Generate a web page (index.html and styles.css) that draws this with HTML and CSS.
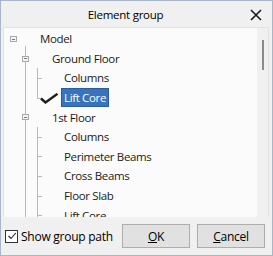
FILE: index.html
```html
<!DOCTYPE html>
<html lang="en">
<head>
  <meta charset="UTF-8">
  <title>Element group</title>
  <link rel="stylesheet" href="styles.css">
</head>
<body>

<div class="window">
  <div class="titlebar">
    <span class="title">Element group</span>
    <svg class="close" width="12" height="12" viewBox="0 0 12 12">
      <path d="M1 1 L11 11 M11 1 L1 11" stroke="#1a1a1a" stroke-width="1.6" fill="none"/>
    </svg>
  </div>

  <div class="tree">
    <div class="items">
      <div class="row">
        <span class="cell exp root"></span>
        <span class="state"></span>
        <span class="label">Model</span>
      </div>
      <div class="row">
        <span class="cell"></span>
        <span class="cell exp first"></span>
        <span class="state"></span>
        <span class="label">Ground Floor</span>
      </div>
      <div class="row">
        <span class="cell"></span>
        <span class="cell vline"></span>
        <span class="cell tee"></span>
        <span class="state"></span>
        <span class="label">Columns</span>
      </div>
      <div class="row">
        <span class="cell"></span>
        <span class="cell vline"></span>
        <span class="cell ell"></span>
        <span class="state">
          <svg class="tick" width="19" height="11" viewBox="0 0 19 11">
            <path d="M1 5.5 L5.5 9.5 L17.5 0.8" stroke="#1e1e1e" stroke-width="2.4" fill="none"/>
          </svg>
        </span>
        <span class="label selected">Lift Core</span>
      </div>
      <div class="row">
        <span class="cell"></span>
        <span class="cell exp"></span>
        <span class="state"></span>
        <span class="label">1st Floor</span>
      </div>
      <div class="row">
        <span class="cell"></span>
        <span class="cell vline"></span>
        <span class="cell tee"></span>
        <span class="state"></span>
        <span class="label">Columns</span>
      </div>
      <div class="row">
        <span class="cell"></span>
        <span class="cell vline"></span>
        <span class="cell tee"></span>
        <span class="state"></span>
        <span class="label">Perimeter Beams</span>
      </div>
      <div class="row">
        <span class="cell"></span>
        <span class="cell vline"></span>
        <span class="cell tee"></span>
        <span class="state"></span>
        <span class="label">Cross Beams</span>
      </div>
      <div class="row">
        <span class="cell"></span>
        <span class="cell vline"></span>
        <span class="cell tee"></span>
        <span class="state"></span>
        <span class="label">Floor Slab</span>
      </div>
      <div class="row">
        <span class="cell"></span>
        <span class="cell vline"></span>
        <span class="cell tee"></span>
        <span class="state"></span>
        <span class="label">Lift Core</span>
      </div>
    </div>
    <div class="scrollbar">
      <div class="thumb"></div>
    </div>
  </div>

  <div class="footer">
    <label class="check">
      <span class="box">
        <svg width="10" height="10" viewBox="0 0 10 10">
          <path d="M1.5 5 L4 7.5 L8.8 2" stroke="#222" stroke-width="1.1" fill="none"/>
        </svg>
      </span>
      Show group path
    </label>
    <button class="btn"><u>O</u>K</button>
    <button class="btn"><u>C</u>ancel</button>
  </div>
</div>

</body>
</html>
```

FILE: styles.css
```css
body {
  margin: 0;
  font-family: "Open Sans", "Noto Sans", sans-serif;
  font-size: 11.5px;
  letter-spacing: -0.25px;
  color: #000;
}

.window {
  width: 273px;
  height: 256px;
  box-sizing: border-box;
  border: 1px solid #a7b6ca;
  background-color: #f0f0f0;
  display: flex;
  flex-direction: column;
}

.titlebar {
  height: 26px;
  display: flex;
  align-items: center;
  justify-content: center;
  position: relative;
}

.title {
  font-size: 11.5px;
  margin-right: 22px;
  margin-top: 1px;
}

.close {
  position: absolute;
  right: 10px;
  top: 8px;
}

.tree {
  height: 190px;
  margin: 0 3px 0 2px;
  border: 1px solid #e2e2e2;
  border-bottom: none;
  box-sizing: border-box;
  display: flex;
  overflow: hidden;
}

.items {
  flex: 1;
  background-color: #fbfbfb;
  padding: 1px 0 0 3px;
  letter-spacing: -0.35px;
}

.row {
  height: 19.6px;
  display: flex;
  align-items: center;
}

.cell {
  width: 12px;
  height: 100%;
  flex-shrink: 0;
  position: relative;
}

/* tree connector lines */
.cell.vline::before,
.cell.tee::before,
.cell.ell::before,
.cell.exp::before {
  content: "";
  position: absolute;
  left: 6px;
  top: 0;
  bottom: 0;
  border-left: 1px solid #b9b9b9;
}

.cell.exp.first::before {
  top: -3px;
}

.cell.ell::before {
  bottom: 50%;
}

.cell.tee::after,
.cell.ell::after {
  content: "";
  position: absolute;
  left: 6px;
  top: 50%;
  width: 5px;
  border-top: 1px solid #b9b9b9;
}

.cell.exp.root::before {
  display: none;
}

/* expander box with a minus sign */
.cell.exp::after {
  content: "";
  position: absolute;
  left: 3px;
  top: 7px;
  width: 5px;
  height: 4px;
  border: 1px solid #a8a8a8;
  background: linear-gradient(#7a7a7a, #7a7a7a) center / 3px 1px no-repeat, #f4f4f4;
}

.state {
  width: 18px;
  height: 100%;
  flex-shrink: 0;
  position: relative;
}

.tick {
  position: absolute;
  left: -3px;
  top: 5px;
}

.label {
  padding: 0 2px;
  line-height: 17px;
  border: 1px solid transparent;
  white-space: nowrap;
  color: #1a1a1a;
}

.label.selected {
  background-color: #3873bd;
  border-color: #2b5d9e;
  color: #fff;
}

.scrollbar {
  width: 11px;
  background-color: #f0f0f0;
  position: relative;
}

.thumb {
  position: absolute;
  left: 5px;
  top: 12px;
  width: 2px;
  height: 30px;
  background-color: #8a8a8a;
}

.footer {
  flex: 1;
  display: flex;
  align-items: center;
  padding: 0 7px 0 4px;
  gap: 7px;
}

.check {
  flex: 1;
  display: flex;
  align-items: center;
  gap: 3px;
  white-space: nowrap;
  font-size: 12px;
}

.box {
  width: 11px;
  height: 11px;
  border: 1px solid #333;
  background-color: #fff;
  display: flex;
  align-items: center;
  justify-content: center;
}

.btn {
  width: 68px;
  height: 24px;
  flex-shrink: 0;
  font-family: inherit;
  font-size: 12px;
  letter-spacing: -0.25px;
  color: #000;
  background-color: #e1e1e1;
  border: 1px solid #adadad;
  padding: 0;
}
```
